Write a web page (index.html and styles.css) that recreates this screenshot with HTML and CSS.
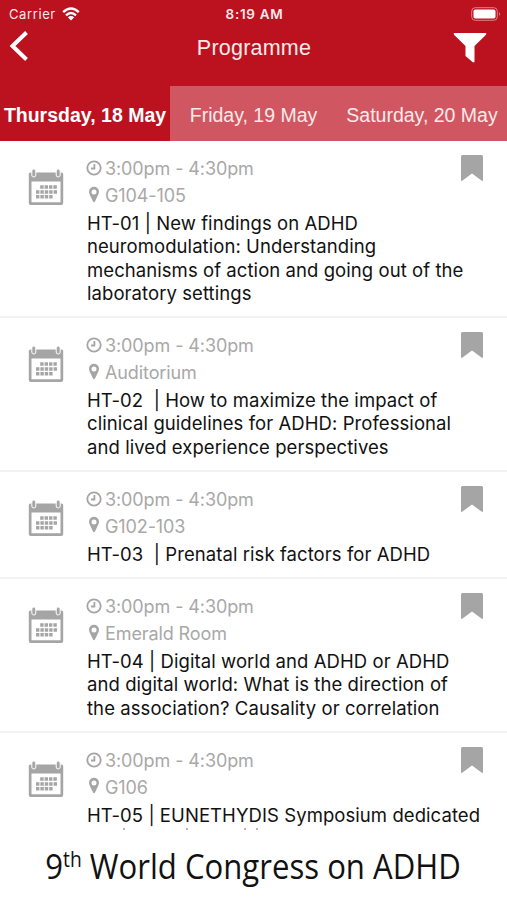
FILE: index.html
```
<!DOCTYPE html>
<html lang="en">
<head>
<meta charset="utf-8">
<title>Programme</title>
<link rel="stylesheet" href="styles.css">
</head>
<body>
<svg class="defs" aria-hidden="true">
  <symbol id="calendar" viewBox="0 0 36 38">
    <path fill-rule="evenodd" d="M2.500 4.500h31q1.700 0 1.700 1.500v29q0 2-2 2H2.800q-2 0-2-2v-29Q.8 4.500 2.500 4.500zM3.500 13.500V34.200h29V13.500z"/>
    <path class="ring" d="M3.800 3q0-2 2-2t2 2v4q0 2-2 2t-2-2zM28.200 3q0-2 2-2t2 2v4q0 2-2 2t-2-2z"/>
    <path class="dots" d="M12.200 19h17M8 23.900h21.500M8 28.800h17"/>
  </symbol>
  <symbol id="clock" viewBox="0 0 16 16"><circle cx="8" cy="8" r="6.700"/><path d="M8.400 4v4.500H5"/></symbol>
  <symbol id="pin" viewBox="0 0 12 17"><path fill-rule="evenodd" d="M6 .8a5 5 0 0 1 5 5c0 1.500-.7 2.700-1.300 4L7 15.400q-1 1.600-2 0L2.300 9.800C1.700 8.500 1 7.300 1 5.800a5 5 0 0 1 5-5zm0 2.600a2.500 2.500 0 1 0 0 5 2.500 2.500 0 0 0 0-5z"/></symbol>
  <symbol id="bookmark" viewBox="0 0 22 27"><path d="M1.500 0h19Q22 0 22 1.500V25q0 1.800-1.500.6L11 18.500 1.500 25.600Q0 26.800 0 25V1.500Q0 0 1.500 0z"/></symbol>
</svg>
<header>
  <div class="status">
    <div class="signal">
      <span class="carrier">Carrier</span>
      <svg class="wifi" viewBox="0 0 18 14"><path d="M1.200 5.200Q9-2 16.800 5.200M4 8.300q5-4.400 10 0"/><path class="solid" d="M5.800 10.300q3.200-2.600 6.400 0L9 13.500z"/></svg>
    </div>
    <span class="clock">8:19 AM</span>
    <svg class="battery" viewBox="0 0 30 14"><rect class="case" x=".7" y=".7" width="25.600" height="12.600" rx="3.500"/><rect class="charge" x="2.500" y="2.500" width="22" height="9" rx="1.800"/><path class="tip" d="M28 5q2 2 0 4z"/></svg>
  </div>
  <div class="bar">
    <svg class="back" viewBox="0 0 20 30"><path d="M17.500 1.500L3.500 15l14 13.500"/></svg>
    <h1>Programme</h1>
    <svg class="filter" viewBox="0 0 34 30"><path d="M1.500 0h31q1.500.3.500 1.800L21.500 13v15.500q-.5 1.500-2 .5L12.500 23V13L1 1.800Q0 .3 1.500 0z"/></svg>
  </div>
  <nav><a class="active"><span>Thursday, 18 May</span></a><a><span>Friday, 19 May</span></a><a><span>Saturday, 20 May</span></a></nav>
</header>
<main>
  <article>
    <svg class="cal"><use href="#calendar"/></svg>
    <div class="info">
      <p class="time"><svg><use href="#clock"/></svg>3:00pm - 4:30pm</p>
      <p class="place"><svg><use href="#pin"/></svg>G104-105</p>
      <h2>HT-01 | New findings on ADHD<br>neuromodulation: Understanding<br>mechanisms of action and going out of the<br>laboratory settings</h2>
    </div>
    <svg class="mark"><use href="#bookmark"/></svg>
  </article>
  <article>
    <svg class="cal"><use href="#calendar"/></svg>
    <div class="info">
      <p class="time"><svg><use href="#clock"/></svg>3:00pm - 4:30pm</p>
      <p class="place"><svg><use href="#pin"/></svg>Auditorium</p>
      <h2>HT-02&nbsp; | How to maximize the impact of<br>clinical guidelines for ADHD: Professional<br>and lived experience perspectives</h2>
    </div>
    <svg class="mark"><use href="#bookmark"/></svg>
  </article>
  <article>
    <svg class="cal"><use href="#calendar"/></svg>
    <div class="info">
      <p class="time"><svg><use href="#clock"/></svg>3:00pm - 4:30pm</p>
      <p class="place"><svg><use href="#pin"/></svg>G102-103</p>
      <h2>HT-03&nbsp; | Prenatal risk factors for ADHD</h2>
    </div>
    <svg class="mark"><use href="#bookmark"/></svg>
  </article>
  <article>
    <svg class="cal"><use href="#calendar"/></svg>
    <div class="info">
      <p class="time"><svg><use href="#clock"/></svg>3:00pm - 4:30pm</p>
      <p class="place"><svg><use href="#pin"/></svg>Emerald Room</p>
      <h2>HT-04 | Digital world and ADHD or ADHD<br>and digital world: What is the direction of<br>the association? Causality or correlation</h2>
    </div>
    <svg class="mark"><use href="#bookmark"/></svg>
  </article>
  <article>
    <svg class="cal"><use href="#calendar"/></svg>
    <div class="info">
      <p class="time"><svg><use href="#clock"/></svg>3:00pm - 4:30pm</p>
      <p class="place"><svg><use href="#pin"/></svg>G106</p>
      <h2>HT-05 | EUNETHYDIS Symposium dedicated</h2>
      <svg class="peek" viewBox="0 0 180 2"><path d="M36 1h2M99 1h2M157 1h2M169 1h2"/></svg>
    </div>
    <svg class="mark"><use href="#bookmark"/></svg>
  </article>
</main>
<footer><span>9<sup>th</sup> World Congress on ADHD</span></footer>
</body>
</html>
```
FILE: styles.css
```
* { box-sizing: border-box; }
body { margin: 0; height: 900px; overflow: hidden; display: flex; flex-direction: column; background: #fff; font-family: Inter, "Liberation Sans", sans-serif; color: #111; }
h1, h2, p { margin: 0; font-weight: 400; }
.defs { display: none; }
header { height: 141px; flex: none; background: #bc1220; color: #ffe9e9; display: flex; flex-direction: column; }
.status { height: 27px; display: grid; grid-template-columns: 1fr auto 1fr; align-items: center; padding: 0 6px 0 9px; font-size: 13px; }
.signal { display: flex; align-items: center; gap: 6px; }
.carrier { letter-spacing: .6px; }
.wifi { width: 18px; height: 14px; fill: none; stroke: #fff; stroke-width: 2.400; }
.wifi .solid { fill: #fff; stroke: none; }
.clock { font-weight: 600; font-size: 13.500px; letter-spacing: .7px; margin-right: 1px; white-space: nowrap; }
.battery { width: 30px; height: 14px; justify-self: end; }
.case { fill: none; stroke: #df8088; stroke-width: 1; }
.charge { fill: #fff; }
.tip { fill: #df8088; }
.bar { height: 59px; display: flex; justify-content: space-between; align-items: flex-start; padding: 4px 20px 0 9px; }
.back { width: 20px; height: 30px; fill: none; stroke: #fff; stroke-width: 4; }
.filter { width: 34px; height: 30px; margin-top: 2px; fill: #fff; }
h1 { font: 21.500px/34px "Liberation Sans", sans-serif; letter-spacing: .22px; margin-left: 26px; }
nav { height: 55px; display: grid; grid-template-columns: 170px 167px 1fr; font: 19.500px/58px "Liberation Sans", sans-serif; text-align: center; white-space: nowrap; overflow: hidden; }
nav a { background: #d05761; }
nav .active { background: #bc1220; color: #fff; font-weight: 700; }
main { height: 689px; flex: none; overflow: hidden; }
article { display: grid; grid-template-columns: 59px minmax(0, 1fr) 22px; padding: 14px 24px 11px 28px; border-bottom: 2px solid #f3f3f3; }
.cal { width: 36px; height: 38px; margin-top: 13px; fill: #a5a5a5; }
.ring { stroke: #fff; stroke-width: 1; }
.dots { fill: none; stroke: #a5a5a5; stroke-width: 3.500; stroke-dasharray: 3.400 1; }
.time, .place { display: flex; align-items: center; height: 27px; font-size: 18px; letter-spacing: -.1px; color: #a8a8a8; white-space: nowrap; }
.time svg { width: 16px; height: 16px; margin: -1px 2px 0 -1px; padding-left: 0; fill: none; stroke: #a5a5a5; stroke-width: 1.800; }
.time { gap: 1px; }
.place svg { width: 12px; height: 17px; margin: -3px 5px 0 1px; fill: #a5a5a5; }
h2 { margin-top: 3px; font-size: 18.500px; line-height: 23.250px; letter-spacing: .07px; white-space: nowrap; }
.peek { display: block; width: 180px; height: 2px; margin-top: 1px; stroke: #b5b5b5; stroke-width: 2; }
.mark { width: 22px; height: 27px; fill: #a5a5a5; }
footer { height: 70px; flex: none; display: flex; justify-content: center; align-items: center; padding-top: 2px; background: #fff; color: #111; font: 34px/40px "Open Sans", sans-serif; white-space: nowrap; }
footer span { transform: scaleX(.915); }
sup { font-size: 21px; line-height: 0; vertical-align: 12px; }
```
